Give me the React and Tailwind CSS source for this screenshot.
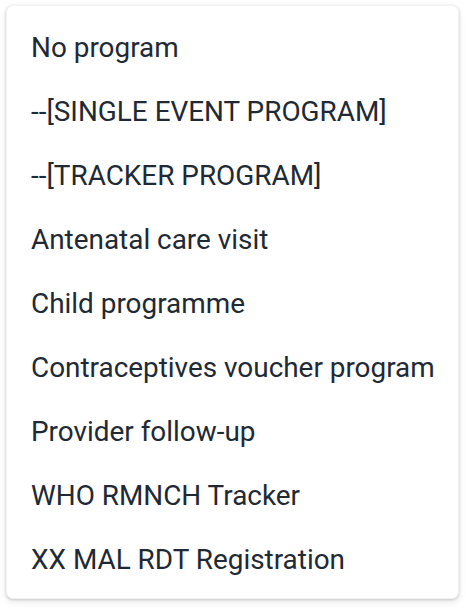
export default function App() {
  const items = [
    "No program",
    "--[SINGLE EVENT PROGRAM]",
    "--[TRACKER PROGRAM]",
    "Antenatal care visit",
    "Child programme",
    "Contraceptives voucher program",
    "Provider follow-up",
    "WHO RMNCH Tracker",
    "XX MAL RDT Registration",
  ];
  return (
    <div className="w-[466px] h-[616px] bg-white pt-[5px] pl-[6px]">
      <div className="w-[453px] rounded-[7px] bg-white pt-[10px] pb-[6px] shadow-[0_1px_3px_rgba(0,0,0,0.18),0_3px_8px_rgba(0,0,0,0.08)] border border-[#f2f2f2]">
        {items.map((t) => (
          <div
            key={t}
            className="h-16 flex items-center px-[24px] text-[27.9px] text-[#212934] whitespace-nowrap"
            style={{ fontFamily: "Roboto, sans-serif" }}
          >
            {t}
          </div>
        ))}
      </div>
    </div>
  );
}
